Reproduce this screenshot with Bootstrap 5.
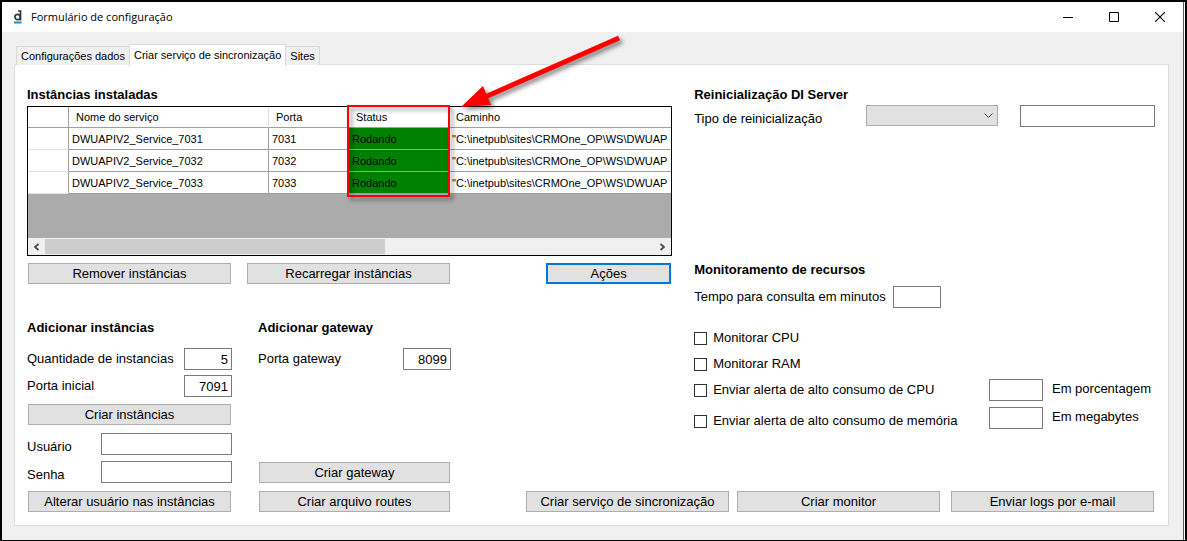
<!DOCTYPE html>
<html lang="pt-BR">
<head>
<meta charset="utf-8">
<meta name="viewport" content="width=device-width, initial-scale=1">
<title>Formulário de configuração</title>
<link href="https://cdn.jsdelivr.net/npm/bootstrap@5.3.0/dist/css/bootstrap.min.css" rel="stylesheet">
<style>
  body { font: 13px/20px "Liberation Sans", Arial, sans-serif; color: #000; background: #f0f0f0; }
  .app-window { min-height: 100vh; border: 2px solid #000; position: relative; }
  .app-window::after { content: ""; position: absolute; top: 0; bottom: 0; right: 0; width: 2px; background: #fff; border-left: 1px solid #5a5a5a; pointer-events: none; }
  .title-bar { height: 30px; background: #fff; padding: 0 2px 0 11px; }
  .title-text { font: 11px/20px "Open Sans", "Segoe UI", sans-serif; }
  .caption-btn { width: 46px; height: 28px; border: 0; border-radius: 0; padding: 0; color: #000; line-height: 0; }
  .tab-area { padding: 12px 16px 14px 12px; }

  .form-tabs { border: 0; margin: 0 0 -2px 2px; position: relative; z-index: 1; }
  .form-tabs .nav-link { font-size: 11px; line-height: 16px; color: #000; background: #f0f0f0; border: 1px solid #d9d9d9; border-bottom: 0; border-radius: 0; height: 19px; padding: 1px 4px; margin: 0 0 1px; }
  .form-tabs .nav-link.active { color: #000; background: #fff; border-color: #d9d9d9; height: 22px; padding: 2px 4px; margin: 0 -1px; }

  .form-panel { background: #fff; border: 1px solid #dcdcdc; padding: 20px 13px 13px 12px; }
  .form-columns { display: grid; grid-template-columns: 7fr 5fr; column-gap: 22px; }
  .section-title { font-size: 13px; line-height: 20px; font-weight: 700; margin: 0; }

  .btn-form { height: 21px; padding: 0 4px; line-height: 19px; font-size: 13px; color: #000; background: #e1e1e1; border: 1px solid #adadad; border-radius: 0; white-space: nowrap; }
  .btn-form:hover { background: #e5f1fb; border-color: #0078d7; }
  .btn-form.is-default { border: 2px solid #0078d7; line-height: 17px; }
  .w-btn { width: 203px; }
  .w-gate { width: 191px; }
  .w-act { width: 125px; }

  .box { height: 22px; min-height: 0; padding: 0 3px; font-size: 13px; line-height: 20px; color: #000; border: 1px solid #7a7a7a; border-radius: 0; background: #fff; }
  .box-sm { width: 48px; }
  .box-md { width: 54px; }
  .box-lg { width: 131px; }
  .box-xl { width: 135px; }
  .pick { appearance: none; width: 132px; height: 21px; border: 1px solid #adadad; border-radius: 0; padding: 0 20px 0 4px; font-size: 13px;
    background: #e1e1e1 url("data:image/svg+xml,%3Csvg xmlns='http://www.w3.org/2000/svg' width='9' height='6'%3E%3Cpath d='M.5 .5l4 4 4-4' fill='none' stroke='%23444'/%3E%3C/svg%3E") no-repeat right 4px center; }

  .grid-frame { height: 150px; border: 1px solid #000; background: #ababab; position: relative; margin-top: 1px; }
  .svc-grid { width: 100%; table-layout: fixed; border-collapse: separate; border-spacing: 0; margin: 0; font-size: 11px; line-height: 20px; background: #fff; }
  .svc-grid th, .svc-grid td { height: 22px; padding: 0 0 0 3px; white-space: nowrap; overflow: hidden; font-weight: 400; border: 0 solid #a0a0a0; border-width: 0 1px 1px 0; }
  .svc-grid thead th { height: 21px; padding-left: 7px; border-right-color: #e0e0e0; }
  .svc-grid tbody th { border-bottom-color: #e0e0e0; }
  .svc-grid th:first-child { border-right-color: #a0a0a0; }
  .svc-grid td:last-child, .svc-grid th:last-child { border-right: 0; }
  .svc-grid td.running { background: #008000; }
  .col-mark { width: 41px; }
  .col-name { width: 200px; }
  .col-port { width: 80px; }
  .col-state { width: 100px; }
  .h-scroll { height: 17px; background: #f0f0f0; }
  .h-scroll button { width: 17px; height: 17px; border: 0; padding: 0; background: #f0f0f0; line-height: 0; }
  .h-thumb { width: 340px; height: 15px; background: #cdcdcd; }
  .callout { position: absolute; left: 319px; top: -70px; overflow: visible; pointer-events: none; z-index: 2; filter: drop-shadow(3px 3px 2px rgba(0,0,0,.45)); }

  .lower-block { margin-top: 34px; }
  .group-a { width: 205px; }
  .group-b { width: 193px; margin-left: 26px; }
  .ms-px { margin-left: 1px; }
  .me-px { margin-right: 1px; }
  .mt-7 { margin-top: 7px; }
  .pair-1 { margin-top: 10px; }
  .pair-2 { margin-top: 5px; }
  .pair-3 { margin-top: 6px; }
  .user-pair label { height: 18px; }
  .foot-gap { margin-left: 28px; }
  .foot-last { margin-left: 11px; }

  .restart-row { gap: 22px; height: 24px; }
  .monitor-title { margin-top: 131px; }
  .monitor-row { margin-top: 6px; gap: 7px; }
  .checks { margin-top: 17px; }
  .checks .tick + label { padding-left: 6px; }
  .check-row { height: 26px; }
  .tick { appearance: none; width: 13px; height: 13px; border: 1px solid #333; background: #fff; margin: 0; flex: none; }
  .tick:checked { background: #333; box-shadow: inset 0 0 0 2px #fff; }
  .alerts { display: grid; grid-template-columns: 1fr 54px 103px; column-gap: 9px; row-gap: 6px; margin-top: 2px; }
</style>
</head>
<body>
<div class="app-window d-flex flex-column">
  <header class="title-bar d-flex align-items-center">
    <svg width="10" height="14" viewBox="0 0 10 14" aria-hidden="true">
      <circle cx="4.600" cy="7" r="2.700" fill="none" stroke="#33363b" stroke-width="1.700"/>
      <path d="M5 1h2.500v9.500" fill="none" stroke="#33363b" stroke-width="1.700"/>
      <path d="M1 11.500h7.500v2H1z" fill="#0e8fd8"/>
    </svg>
    <span class="title-text ms-2">Formulário de configuração</span>
    <div class="d-flex ms-auto">
      <button class="btn caption-btn" type="button" aria-label="Minimizar"><svg width="10" height="10"><path d="M0 5.500h10" stroke="#000"/></svg></button>
      <button class="btn caption-btn" type="button" aria-label="Maximizar"><svg width="10" height="10"><path d="M.5.5h9v9h-9z" fill="none" stroke="#000"/></svg></button>
      <button class="btn caption-btn" type="button" aria-label="Fechar"><svg width="10" height="10"><path d="M0 0l10 10M10 0L0 10" stroke="#000" stroke-width="1.100"/></svg></button>
    </div>
  </header>

  <main class="tab-area flex-grow-1 d-flex flex-column">
    <nav class="nav nav-tabs form-tabs align-items-end flex-nowrap">
      <a class="nav-link" href="#">Configurações dados</a>
      <a class="nav-link active" href="#" aria-current="page">Criar serviço de sincronização</a>
      <a class="nav-link" href="#">Sites</a>
    </nav>

    <form class="form-panel flex-grow-1 d-flex flex-column">
      <div class="form-columns">
        <div>
          <h2 class="section-title">Instâncias instaladas</h2>
          <div class="grid-frame d-flex flex-column">
            <div class="overflow-hidden">
              <table class="svc-grid">
                <colgroup><col class="col-mark"><col class="col-name"><col class="col-port"><col class="col-state"><col></colgroup>
                <thead>
                  <tr><th></th><th>Nome do serviço</th><th>Porta</th><th>Status</th><th>Caminho</th></tr>
                </thead>
                <tbody>
                  <tr><th></th><td>DWUAPIV2_Service_7031</td><td>7031</td><td class="running">Rodando</td><td>"C:\inetpub\sites\CRMOne_OP\WS\DWUAP</td></tr>
                  <tr><th></th><td>DWUAPIV2_Service_7032</td><td>7032</td><td class="running">Rodando</td><td>"C:\inetpub\sites\CRMOne_OP\WS\DWUAP</td></tr>
                  <tr><th></th><td>DWUAPIV2_Service_7033</td><td>7033</td><td class="running">Rodando</td><td>"C:\inetpub\sites\CRMOne_OP\WS\DWUAP</td></tr>
                </tbody>
              </table>
            </div>
            <div class="h-scroll d-flex align-items-center mt-auto">
              <button type="button" aria-label="Rolar para a esquerda"><svg width="7" height="8"><path d="M5.500 1L2 4l3.500 3" fill="none" stroke="#444" stroke-width="1.700"/></svg></button>
              <div class="h-thumb"></div>
              <button class="ms-auto" type="button" aria-label="Rolar para a direita"><svg width="7" height="8"><path d="M1.500 1L5 4 1.500 7" fill="none" stroke="#444" stroke-width="1.700"/></svg></button>
            </div>
            <svg class="callout" width="276" height="162" aria-hidden="true">
              <path d="M1 69h101v90H1z" fill="none" stroke="#f00" stroke-width="2"/>
              <path d="M272 1L138 60" stroke="#f00" stroke-width="5"/>
              <path d="M114 70L136 49L144 68z" fill="#f00"/>
            </svg>
          </div>
          <div class="d-flex mt-7">
            <button class="btn btn-form w-btn ms-px" type="button">Remover instâncias</button>
            <button class="btn btn-form w-btn ms-3" type="button">Recarregar instâncias</button>
            <button class="btn btn-form is-default w-act ms-auto me-px" type="button">Ações</button>
          </div>

          <div class="lower-block d-flex">
            <div class="group-a">
              <h2 class="section-title">Adicionar instâncias</h2>
              <div class="d-flex justify-content-between align-items-center pair-1">
                <label for="qtd">Quantidade de instancias</label>
                <input class="form-control box box-sm text-end" id="qtd" value="5">
              </div>
              <div class="d-flex justify-content-between align-items-center pair-2">
                <label for="porta">Porta inicial</label>
                <input class="form-control box box-sm text-end" id="porta" value="7091">
              </div>
              <button class="btn btn-form w-btn d-block ms-px mt-7" type="button">Criar instâncias</button>
              <div class="user-pair d-flex justify-content-between align-items-end mt-2">
                <label for="usuario">Usuário</label>
                <input class="form-control box box-lg" id="usuario">
              </div>
              <div class="user-pair d-flex justify-content-between align-items-end pair-3">
                <label for="senha">Senha</label>
                <input class="form-control box box-lg" id="senha" type="password">
              </div>
            </div>
            <div class="group-b d-flex flex-column">
              <h2 class="section-title">Adicionar gateway</h2>
              <div class="d-flex justify-content-between align-items-center pair-1">
                <label for="gateway">Porta gateway</label>
                <input class="form-control box box-sm text-end" id="gateway" value="8099">
              </div>
              <button class="btn btn-form w-gate mt-auto ms-px" type="button">Criar gateway</button>
            </div>
          </div>
        </div>

        <div>
          <h2 class="section-title">Reinicialização DI Server</h2>
          <div class="d-flex align-items-start restart-row">
            <label for="tipo" class="me-auto pt-1">Tipo de reinicialização</label>
            <select class="pick" id="tipo"></select>
            <input class="form-control box box-xl" aria-label="Valor da reinicialização">
          </div>

          <h2 class="section-title monitor-title">Monitoramento de recursos</h2>
          <div class="d-flex align-items-center monitor-row">
            <label for="tempo">Tempo para consulta em minutos</label>
            <input class="form-control box box-sm" id="tempo">
          </div>
          <div class="checks">
            <div class="check-row d-flex align-items-center"><input class="tick" type="checkbox" id="cpu"><label for="cpu">Monitorar CPU</label></div>
            <div class="check-row d-flex align-items-center"><input class="tick" type="checkbox" id="ram"><label for="ram">Monitorar RAM</label></div>
            <div class="alerts">
              <div class="d-flex align-items-center"><input class="tick" type="checkbox" id="acpu"><label for="acpu">Enviar alerta de alto consumo de CPU</label></div>
              <input class="form-control box box-md" id="pct">
              <label for="pct">Em porcentagem</label>
              <div class="d-flex align-items-center pt-1"><input class="tick" type="checkbox" id="amem"><label for="amem">Enviar alerta de alto consumo de memória</label></div>
              <input class="form-control box box-md" id="mb">
              <label for="mb">Em megabytes</label>
            </div>
          </div>
        </div>
      </div>

      <div class="d-flex mt-auto pt-2">
        <button class="btn btn-form w-btn ms-px" type="button">Alterar usuário nas instâncias</button>
        <button class="btn btn-form w-gate foot-gap" type="button">Criar arquivo routes</button>
        <button class="btn btn-form w-btn ms-auto" type="button">Criar serviço de sincronização</button>
        <button class="btn btn-form w-btn ms-2" type="button">Criar monitor</button>
        <button class="btn btn-form w-btn foot-last me-px" type="button">Enviar logs por e-mail</button>
      </div>
    </form>
  </main>
</div>
<script src="https://cdn.jsdelivr.net/npm/bootstrap@5.3.0/dist/js/bootstrap.bundle.min.js"></script>
</body>
</html>
